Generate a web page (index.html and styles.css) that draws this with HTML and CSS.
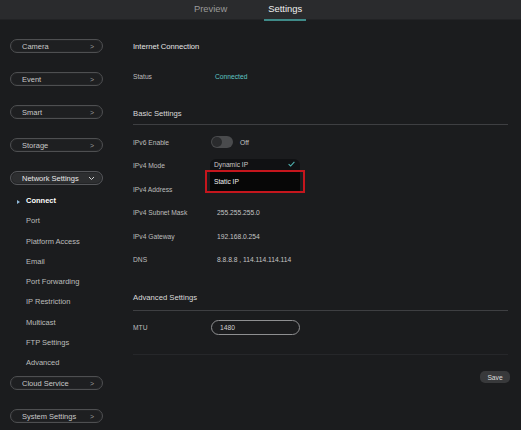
FILE: index.html
```html
<!DOCTYPE html>
<html>
<head>
<meta charset="utf-8">
<link rel="stylesheet" href="styles.css">
</head>
<body>
<div class="topbar">
  <div class="tab">Preview</div>
  <div class="tab active">Settings</div>
</div>
<div class="main">
  <aside class="sidebar">
    <div class="pill"><span>Camera</span><span class="chev">&gt;</span></div>
    <div class="pill"><span>Event</span><span class="chev">&gt;</span></div>
    <div class="pill"><span>Smart</span><span class="chev">&gt;</span></div>
    <div class="pill"><span>Storage</span><span class="chev">&gt;</span></div>
    <div class="pill open"><span>Network Settings</span><span class="chev down">
      <svg width="7" height="5" viewBox="0 0 7 5"><path d="M1 1 L3.5 3.5 L6 1" fill="none" stroke="#cfcfcf" stroke-width="1"/></svg></span></div>
    <ul class="sub">
      <li class="current">Connect</li>
      <li>Port</li>
      <li>Platform Access</li>
      <li>Email</li>
      <li>Port Forwarding</li>
      <li>IP Restriction</li>
      <li>Multicast</li>
      <li>FTP Settings</li>
      <li>Advanced</li>
    </ul>
    <div class="pill after-sub"><span>Cloud Service</span><span class="chev">&gt;</span></div>
    <div class="pill"><span>System Settings</span><span class="chev">&gt;</span></div>
  </aside>
  <section class="content">
    <div class="title">Internet Connection</div>
    <div class="row status"><div class="label">Status</div><div class="value teal">Connected</div></div>

    <div class="heading basic">Basic Settings</div>
    <div class="rows">
      <div class="row"><div class="label">IPv6 Enable</div><div class="value toggle-cell"><span class="toggle"><span class="knob"></span></span><span class="off">Off</span></div></div>
      <div class="row"><div class="label">IPv4 Mode</div><div class="value dd-cell">
        <div class="dropdown">
          <div class="opt sel">Dynamic IP<svg class="check" width="7" height="6" viewBox="0 0 7 6"><path d="M0.6 3.2 L2.6 5 L6.4 0.8" fill="none" stroke="#4fb3b0" stroke-width="1.1"/></svg></div>
          <div class="opt hl">Static IP</div>
        </div>
      </div></div>
      <div class="row"><div class="label">IPv4 Address</div><div class="value ip">192.168.0.100</div></div>
      <div class="row"><div class="label">IPv4 Subnet Mask</div><div class="value ip">255.255.255.0</div></div>
      <div class="row"><div class="label">IPv4 Gateway</div><div class="value ip">192.168.0.254</div></div>
      <div class="row"><div class="label">DNS</div><div class="value ip">8.8.8.8 , 114.114.114.114</div></div>
    </div>

    <div class="heading adv">Advanced Settings</div>
    <div class="rows mtu-rows">
      <div class="row"><div class="label">MTU</div><div class="value"><div class="input">1480</div></div></div>
    </div>
    <div class="divider"></div>
    <div class="actions"><button class="save">Save</button></div>
  </section>
</div>
</body>
</html>
```

FILE: styles.css
```css
* { box-sizing: border-box; }
html, body { margin: 0; padding: 0; }
body {
  width: 521px;
  height: 430px;
  overflow: hidden;
  background: #1b1c1e;
  font-family: "Liberation Sans", Arial, sans-serif;
  color: #c4c4c4;
}
.topbar {
  height: 20px;
  background: #2a2b2d;
  border-bottom: 1px solid #222325;
  display: flex;
  justify-content: center;
  padding-right: 25px;
  gap: 33px;
}
.tab {
  position: relative;
  font-size: 9.4px;
  line-height: 17px;
  color: #9a9a9a;
  padding: 0 4px;
}
.tab.active { color: #f0f0f0; }
.tab.active::after {
  content: "";
  position: absolute;
  left: 0; right: 0;
  bottom: -2px;
  height: 2px;
  background: #3f8a88;
}
.main { display: flex; }
.sidebar {
  width: 120px;
  flex: none;
  padding: 19px 0 0 10px;
}
.pill {
  width: 93px;
  height: 14px;
  border-radius: 7px;
  border: 1px solid #4e4f51;
  box-shadow: inset 0 0 0 1px #232426;
  background: #1e1f21;
  display: flex;
  align-items: center;
  justify-content: space-between;
  padding: 0 8px 0 11px;
  font-size: 7.5px;
  color: #c8c8c8;
  margin-bottom: 19px;
}
.pill.open {
  background: #2d2e30;
  border-color: #55565a;
  color: #e8e8e8;
  margin-bottom: 6px;
}
.chev { font-size: 7px; color: #9a9a9a; }
.chev.down { display: flex; align-items: center; margin-right: -1px; }
.sub {
  list-style: none;
  margin: 0;
  padding: 0;
}
.sub li {
  height: 20.25px;
  line-height: 20.25px;
  font-size: 7.5px;
  padding-left: 16px;
  color: #bcbcbc;
  position: relative;
}
.sub li.current {
  color: #ffffff;
  font-weight: bold;
}
.sub li.current::before {
  content: "";
  position: absolute;
  left: 7px;
  top: 8.5px;
  border-left: 3px solid #8fb8d8;
  border-top: 2px solid transparent;
  border-bottom: 2px solid transparent;
}
.pill.after-sub { margin-top: 3px; }

.content {
  flex: 1;
  padding: 20px 13px 0 13px;
}
.title {
  height: 14px;
  line-height: 14px;
  font-size: 7.6px;
  color: #e6e6e6;
}
.row {
  display: flex;
  align-items: center;
  height: 23.4px;
  font-size: 6.7px;
}
.row.status { height: 14px; margin-top: 15px; }
.label { width: 78px; flex: none; color: #bdbdbd; }
.value { flex: 1; color: #c6c6c6; }
.value.teal { color: #5fc7c4; padding-left: 4px; }
.value.ip { padding-left: 6px; }
.heading {
  font-size: 7.7px;
  line-height: 14px;
  color: #dadada;
  padding-bottom: 3px;
  border-bottom: 1px solid #3e3f42;
}
.heading.basic { margin-top: 24px; }
.heading.adv { margin-top: 20px; padding-bottom: 5px; }
.rows { margin-top: 5.8px; }
.rows.mtu-rows { margin-top: 4.8px; }
.toggle-cell { display: flex; align-items: center; }
.toggle {
  width: 22px;
  height: 12px;
  border-radius: 6px;
  background: #4a4b4d;
  display: flex;
  align-items: center;
  padding-left: 1px;
}
.knob {
  width: 10px;
  height: 10px;
  border-radius: 50%;
  background: #2a2b2d;
}
.off { margin-left: 7px; color: #c6c6c6; }
.dd-cell { position: relative; align-self: stretch; }
.dropdown {
  position: absolute;
  left: -1px;
  top: 4.6px;
  width: 90px;
  z-index: 2;
}
.opt {
  font-size: 6.7px;
  color: #c8c8c8;
  padding-left: 4px;
  display: flex;
  align-items: center;
}
.opt.sel {
  height: 12px;
  background: #101113;
  border-radius: 6px 6px 0 0;
  justify-content: space-between;
  padding-right: 5px;
}
.check { margin-top: -1px; }
.opt.hl {
  position: relative;
  height: 21px;
  background: #070707;
  color: #f2f2f2;
}
.opt.hl::after {
  content: "";
  position: absolute;
  left: -5px;
  right: -5px;
  top: -1px;
  bottom: -1px;
  border: 2px solid #c5161d;
}
.input {
  width: 89px;
  height: 15px;
  border: 1px solid #8e8f91;
  border-radius: 8px;
  padding-left: 8px;
  line-height: 13px;
  color: #d0d0d0;
  font-size: 6.7px;
}
.divider {
  margin-top: 15px;
  border-top: 1px solid #26272a;
}
.actions {
  display: flex;
  justify-content: flex-end;
  margin-top: 16px;
}
.save {
  width: 30px;
  height: 12px;
  border: none;
  border-radius: 5px;
  background: #38393b;
  color: #dedede;
  font-family: "Liberation Sans", Arial, sans-serif;
  font-size: 6.7px;
  padding: 0;
  margin-right: -2px;
}
```
